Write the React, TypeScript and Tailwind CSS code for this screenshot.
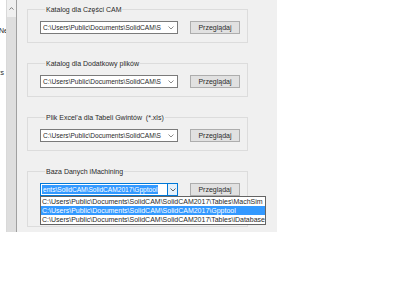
const paths = [
  'C:\\Users\\Public\\Documents\\SolidCAM\\SolidCAM2017\\Tables\\MachSim',
  'C:\\Users\\Public\\Documents\\SolidCAM\\SolidCAM2017\\Gpptool',
  'C:\\Users\\Public\\Documents\\SolidCAM\\SolidCAM2017\\Tables\\iDatabase',
];

const groups = [
  { label: 'Katalog dla Części CAM' },
  { label: 'Katalog dla Dodatkowy plików' },
  { label: 'Plik Excel\u2019a dla Tabeli Gwintów\u00a0\u00a0(*.xls)' },
];

const Chevron = ({ color = '#707070' }: { color?: string }) => (
  <svg width="6" height="4" viewBox="0 0 6 4" className="shrink-0">
    <path d="M0.5 0.5 L3 3 L5.5 0.5" fill="none" stroke={color} strokeWidth="0.8" />
  </svg>
);

const BrowseButton = () => (
  <button className="h-[13px] w-[50px] shrink-0 border border-[#adadad] bg-[#e1e1e1] text-[7px] leading-[11px] text-[#2a2a2a]">
    Przeglądaj
  </button>
);

const Group = ({ label, children, bottom = 'pb-[8px]' }: { label: string; children: React.ReactNode; bottom?: string }) => (
  <fieldset className={`ml-[10px] w-[221px] border border-[#dcdcdc] pl-[12px] pt-[7px] ${bottom}`}>
    <legend className="ml-[5px] px-[1px] text-[7px] leading-[9px] text-[#2a2a2a]">{label}</legend>
    <div className="flex items-center gap-[12px]">{children}</div>
  </fieldset>
);

export default function App() {
  return (
    <div className="h-[300px] w-[400px] bg-white" style={{ fontFamily: '"Liberation Sans", Arial, sans-serif' }}>
      <div className="flex h-[232px] w-[277px]">
        {/* list edge + scrollbar */}
        <div className="relative w-[6px] overflow-hidden bg-white text-[7px] leading-[9px] text-[#2a2a2a]">
          <div className="absolute left-[-1px] top-[26px]">Ne</div>
          <div className="absolute left-[-3px] top-[68px]">zs</div>
        </div>
        <div className="flex w-[10px] flex-col border-l border-[#d9d9d9] bg-[#e8e8e8]">
          <div className="flex h-[17px] items-center justify-center bg-[#f0f0f0]">
            <svg width="5" height="3" viewBox="0 0 5 3">
              <path d="M0.5 2.6 L2.5 0.6 L4.5 2.6" fill="none" stroke="#606060" strokeWidth="0.8" />
            </svg>
          </div>
          <div className="flex-1 bg-[#dedede]" />
        </div>
        <div className="w-px bg-[#a0a0a0]" />

        <div className="flex flex-1 flex-col gap-[16px] bg-[#f0f0f0] pt-[5px]">
          {groups.map((g) => (
            <Group key={g.label} label={g.label}>
              <div className="flex h-[13px] w-[138px] items-center justify-between border border-[#7a7a7a] bg-white pl-[2px] pr-[3px]">
                <span className="whitespace-nowrap text-[6.6px] leading-[9px] text-[#2a2a2a]">
                  C:\Users\Public\Documents\SolidCAM\S
                </span>
                <Chevron />
              </div>
              <BrowseButton />
            </Group>
          ))}

          <Group label="Baza Danych iMachining" bottom="pb-[30px]">
            <div className="relative flex h-[13px] w-[138px] border border-[#0078d7] bg-white">
              <div className="flex flex-1 items-center pl-[1px]">
                <span className="whitespace-nowrap bg-[#3399ff] px-[1px] text-[6.6px] leading-[9px] text-white">
                  ents\SolidCAM\SolidCAM2017\Gpptool
                </span>
              </div>
              <div className="flex w-[10px] items-center justify-center border-l border-[#0078d7] bg-[#e5f1fb]">
                <Chevron color="#404040" />
              </div>
              <div className="absolute left-[-1px] top-[12px] z-10 w-[226px] border border-[#646464] bg-white">
                {paths.map((p, i) => (
                  <div
                    key={p}
                    className={`h-[9px] whitespace-nowrap pl-[1px] text-[7px] leading-[9px] ${
                      i === 1 ? 'bg-[#3399ff] text-white' : 'text-[#2a2a2a]'
                    }`}
                  >
                    {p}
                  </div>
                ))}
              </div>
            </div>
            <BrowseButton />
          </Group>
        </div>
      </div>
    </div>
  );
}
